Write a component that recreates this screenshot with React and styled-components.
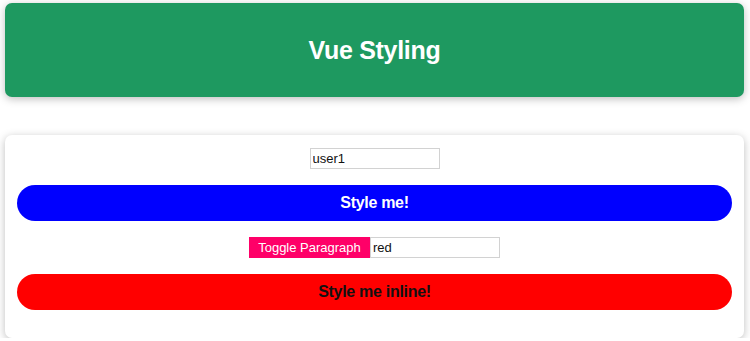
import styled, { createGlobalStyle } from "styled-components";

const Global = createGlobalStyle`
  html, body { margin: 0; padding: 0; background: #fff; }
  body { font-family: "Liberation Sans", Arial, sans-serif; }
  * { box-sizing: border-box; }
`;

const Pagina = styled.div`
  padding: 3px 6px 0 5px;
`;

const Cabecera = styled.header`
  height: 94px;
  background-color: #1e9960;
  border-radius: 7px;
  box-shadow: 0 2px 8px rgba(0, 0, 0, 0.26);
  display: flex;
  align-items: center;
  justify-content: center;
`;

const Titulo = styled.h1`
  margin: 0;
  color: #fff;
  font-size: 25px;
  font-weight: bold;
  letter-spacing: -0.3px;
`;

const Tarjeta = styled.section`
  margin-top: 38px;
  height: 203px;
  padding: 13px 12px 0;
  border-radius: 7px;
  box-shadow: 0 2px 8px rgba(0, 0, 0, 0.26);
  display: flex;
  flex-direction: column;
  align-items: center;
  gap: 16px;
`;

const Campo = styled.input`
  width: 130px;
  height: 21px;
  border: 1px solid #d2d2d2;
  padding: 0 2px;
  font-family: inherit;
  font-size: 13px;
  color: #111;
  outline: none;
`;

const BotonRedondo = styled.button`
  width: 100%;
  height: 36px;
  border: none;
  border-radius: 18px;
  background-color: ${props => props.fondo};
  color: ${props => props.texto};
  font-family: inherit;
  font-size: 16px;
  font-weight: bold;
  letter-spacing: -0.3px;
  cursor: pointer;
`;

const Fila = styled.div`
  display: flex;
  height: 21px;
`;

const BotonAlternar = styled.button`
  width: 121px;
  height: 21px;
  border: none;
  background-color: #ff0068;
  color: #fff;
  font-family: inherit;
  font-size: 13px;
  padding: 0;
`;

export default function App() {
  return (
    <>
      <Global />
      <Pagina>
        <Cabecera>
          <Titulo>Vue Styling</Titulo>
        </Cabecera>
        <Tarjeta>
          <Campo defaultValue="user1" />
          <BotonRedondo fondo="#0000ff" texto="#fff">Style me!</BotonRedondo>
          <Fila>
            <BotonAlternar>Toggle Paragraph</BotonAlternar>
            <Campo defaultValue="red" />
          </Fila>
          <BotonRedondo fondo="#ff0000" texto="#111">Style me inline!</BotonRedondo>
        </Tarjeta>
      </Pagina>
    </>
  );
}
